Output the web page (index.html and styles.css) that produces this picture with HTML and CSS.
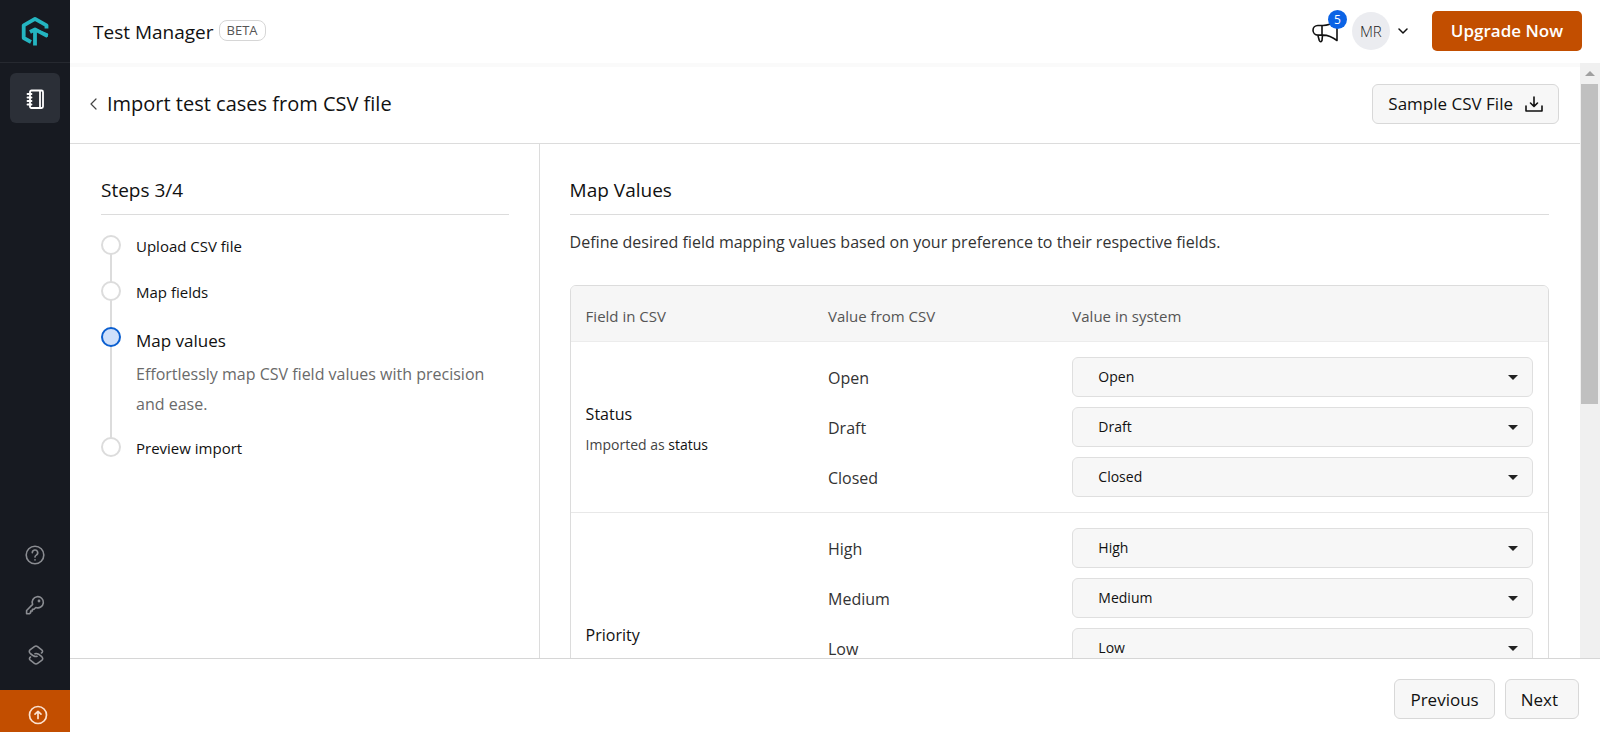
FILE: index.html
```html
<!DOCTYPE html>
<html lang="en">
<head>
<meta charset="utf-8">
<meta name="viewport" content="width=device-width, initial-scale=1">
<title>Test Manager</title>
<link rel="stylesheet" href="styles.css">
</head>
<body>
<div class="app">
  <nav class="sidebar" aria-label="Main">
    <a class="logo" href="#" aria-label="Home">
      <svg width="28" height="30" viewBox="0 0 28 30" fill="none" stroke="#24b5c1" stroke-width="3.800" stroke-linejoin="round">
        <path d="M25.500 12.500V9.300L14 2.800L2.700 9.300V22L10 26"/>
        <path d="M9 16L14 13.300L26.500 20.200M14 13V29.500"/>
        <path d="M17 13.500L27 17.500V21L21 18.500Z" fill="#24b5c1" stroke="none"/>
      </svg>
    </a>
    <a class="nav-item active" href="#" aria-label="Test cases">
      <svg width="20" height="20" viewBox="0 0 20 20" fill="none" stroke="#fff" stroke-width="1.800" stroke-linecap="round">
        <rect x="5" y="1.500" width="13" height="17.500" rx="1.500"/>
        <path d="M15 2v16.500M2.500 5h4M2.500 8.500h4M2.500 12h4M2.500 15.500h4"/>
      </svg>
    </a>
    <div class="nav-bottom">
      <a class="nav-link" href="#" aria-label="Help">
        <svg width="20" height="20" viewBox="0 0 20 20" fill="none" stroke="currentColor" stroke-width="1.600" stroke-linecap="round">
          <circle cx="10" cy="10" r="8.800"/>
          <path d="M7.300 7.800a2.700 2.700 0 1 1 4 2.300c-.9.500-1.300 1-1.300 2M10 14.700v.2"/>
        </svg>
      </a>
      <a class="nav-link" href="#" aria-label="Access key">
        <svg width="20" height="20" viewBox="0 0 20 20" fill="none" stroke="currentColor" stroke-width="1.600" stroke-linejoin="round" stroke-linecap="round">
          <path d="M7.600 9.400A5.600 5.600 0 1 1 10.800 12.500L8.800 14.300H7.400V16H5.700V17.600L4.500 18.700H1.600V15.500Z"/>
          <circle cx="14" cy="6" r=".6" fill="currentColor"/>
        </svg>
      </a>
      <a class="nav-link" href="#" aria-label="Integrations">
        <svg width="20" height="20" viewBox="0 0 20 20" fill="none" stroke="currentColor" stroke-width="1.600" stroke-linejoin="round" stroke-linecap="round">
          <path d="M12 11.300C9.500 12.300 7.500 10.500 5.200 8.300C4 7 4 5.600 5.300 4.600L9.400 1.600C10.400.9 11.600.9 12.600 1.600L16.700 4.800C18 5.900 17.700 7.200 16.500 8"/>
          <path d="M10 8.700C12.500 7.700 14.500 9.500 16.800 11.700C18 13 18 14.400 16.700 15.400L12.600 18.400C11.600 19.100 10.400 19.100 9.400 18.400L5.300 15.200C4 14.100 4.300 12.800 5.500 12"/>
        </svg>
      </a>
    </div>
    <a class="nav-upgrade" href="#" aria-label="Upgrade">
      <svg width="20" height="20" viewBox="0 0 20 20" fill="none" stroke="currentColor" stroke-width="1.700" stroke-linejoin="round" stroke-linecap="round">
        <circle cx="10" cy="10" r="8.500"/>
        <path d="M10 13.500V6.700M7 9.200L10 6.400L13 9.200"/>
      </svg>
    </a>
  </nav>

  <div class="main">
    <header class="topbar">
      <div class="brand"><span class="brand-name">Test Manager</span><span class="beta">BETA</span></div>
      <div class="top-actions">
        <button class="news" type="button" aria-label="Announcements">
          <svg width="28" height="26" viewBox="0 0 28 26" fill="none" stroke="currentColor" stroke-width="1.600" stroke-linejoin="round">
            <path d="M11 7.500H5.800a4.800 4.800 0 0 0 0 9.600H11C16 17.100 20.500 19 25 22.500V2.500C20.500 5.500 16 7.500 11 7.500ZM10 7.500V17M5.800 17L7.300 22.500Q8.500 25 10 22.500L10.500 17"/>
          </svg>
          <span class="count">5</span>
        </button>
        <button class="profile" type="button">
          <span class="avatar">MR</span>
          <svg width="10" height="6" viewBox="0 0 10 6" fill="none" stroke="currentColor" stroke-width="1.500" stroke-linecap="round" stroke-linejoin="round"><path d="M1 1L5 5L9 1"/></svg>
        </button>
        <button class="upgrade" type="button">Upgrade Now</button>
      </div>
    </header>

    <div class="body">
      <main class="scroll">
        <div class="page-head">
          <a class="back" href="#" aria-label="Back">
            <svg width="7" height="12" viewBox="0 0 7 12" fill="none" stroke="currentColor" stroke-width="1.200" stroke-linecap="round" stroke-linejoin="round"><path d="M6 1L1 6L6 11"/></svg>
          </a>
          <h1 class="title">Import test cases from CSV file</h1>
          <button class="btn sample" type="button">Sample CSV File
            <svg width="18" height="16" viewBox="0 0 18 16" fill="none" stroke="currentColor" stroke-width="1.600" stroke-linecap="round" stroke-linejoin="round"><path d="M1 10V15H17V10M9 1V10M5.500 7L9 10.500L12.500 7"/></svg>
          </button>
        </div>
        <div class="columns">
          <aside class="steps-panel">
            <h2 class="heading">Steps 3/4</h2>
            <ol class="steps">
              <li class="step">Upload CSV file</li>
              <li class="step">Map fields</li>
              <li class="step current" aria-current="step">
                <span class="step-name">Map values</span>
                <p class="step-note">Effortlessly map CSV field values with precision and ease.</p>
              </li>
              <li class="step">Preview import</li>
            </ol>
          </aside>
          <section class="content">
            <h2 class="heading">Map Values</h2>
            <p class="intro">Define desired field mapping values based on your preference to their respective fields.</p>
            <div class="table-box">
              <table class="map">
                <thead>
                  <tr><th class="col-field" scope="col">Field in CSV</th><th class="col-value" scope="col">Value from CSV</th><th scope="col">Value in system</th></tr>
                </thead>
                <tbody>
                  <tr>
                    <th class="field" scope="rowgroup" rowspan="3"><span class="field-name">Status</span><span class="field-note">Imported as <b>status</b></span></th>
                    <td><label for="s1">Open</label></td>
                    <td><div class="pick"><select id="s1"><option>Open</option></select></div></td>
                  </tr>
                  <tr><td><label for="s2">Draft</label></td><td><div class="pick"><select id="s2"><option>Draft</option></select></div></td></tr>
                  <tr><td><label for="s3">Closed</label></td><td><div class="pick"><select id="s3"><option>Closed</option></select></div></td></tr>
                </tbody>
                <tbody>
                  <tr>
                    <th class="field" scope="rowgroup" rowspan="5"><span class="field-name">Priority</span><span class="field-note">Imported as <b>priority</b></span></th>
                    <td><label for="p1">High</label></td>
                    <td><div class="pick"><select id="p1"><option>High</option></select></div></td>
                  </tr>
                  <tr><td><label for="p2">Medium</label></td><td><div class="pick"><select id="p2"><option>Medium</option></select></div></td></tr>
                  <tr><td><label for="p3">Low</label></td><td><div class="pick"><select id="p3"><option>Low</option></select></div></td></tr>
                  <tr><td><label for="p4">Critical</label></td><td><div class="pick"><select id="p4"><option>Critical</option></select></div></td></tr>
                  <tr><td><label for="p5">None</label></td><td><div class="pick"><select id="p5"><option>None</option></select></div></td></tr>
                </tbody>
              </table>
            </div>
          </section>
        </div>
      </main>
      <div class="scrollbar" aria-hidden="true">
        <svg width="10" height="5" viewBox="0 0 10 5" fill="#a0a0a0"><path d="M0 5L5 0L10 5Z"/></svg>
        <div class="thumb"></div>
      </div>
    </div>

    <footer class="footer">
      <button class="btn" type="button">Previous</button>
      <button class="btn next" type="button">Next</button>
    </footer>
  </div>
</div>
</body>
</html>
```
FILE: styles.css
```css
*, *::before, *::after { box-sizing: border-box; }
body {
  margin: 0;
  font-family: "Open Sans", "Noto Sans", sans-serif;
  font-size: 17px;
  color: #111;
  background: #fff;
}
a { color: inherit; text-decoration: none; }
svg { display: block; flex: none; }
button { font: inherit; color: inherit; cursor: pointer; }

.app { display: flex; height: 100vh; }

.sidebar {
  flex: none;
  width: 70px;
  display: flex;
  flex-direction: column;
  align-items: center;
  background: #171a21;
}
.logo {
  width: 100%;
  height: 63px;
  display: grid;
  place-items: center;
  border-bottom: 1px solid #262930;
}
.nav-item {
  width: 50px;
  height: 50px;
  margin-top: 10px;
  padding-top: 2px;
  display: grid;
  place-items: center;
  border-radius: 6px;
  background: #2b2f37;
}
.nav-bottom {
  margin-top: auto;
  padding-bottom: 10px;
  color: #8b8d92;
}
.nav-link {
  width: 50px;
  height: 50px;
  display: grid;
  place-items: center;
}
.nav-upgrade {
  width: 100%;
  height: 42px;
  padding: 8px 0 0 5px;
  display: grid;
  place-items: center;
  background: #c24e00;
  color: #fbe3d2;
}

.main { flex: 1; min-width: 0; display: flex; flex-direction: column; }

.topbar {
  flex: none;
  height: 63px;
  padding: 0 18px 2px 23px;
  display: flex;
  align-items: center;
  justify-content: space-between;
}
.brand { display: flex; align-items: center; gap: 5px; }
.brand-name { padding-top: 2px; font-size: 19px; }
.beta {
  height: 21px;
  padding: 0 7px;
  border: 1px solid #d6d6d6;
  border-radius: 8px;
  font-size: 13px;
  line-height: 19px;
  color: #555;
}
.top-actions { display: flex; align-items: center; }
.news {
  position: relative;
  width: 28px;
  margin-right: 12px;
  padding: 0;
  border: 0;
  background: none;
}
.count {
  position: absolute;
  top: -8px;
  left: 16px;
  width: 19px;
  height: 19px;
  border-radius: 50%;
  background: #0b63e5;
  color: #fff;
  font-size: 12px;
  line-height: 19px;
}
.profile {
  display: flex;
  align-items: center;
  gap: 8px;
  margin-right: 24px;
  padding: 0;
  border: 0;
  background: none;
}
.avatar {
  width: 38px;
  height: 38px;
  border-radius: 50%;
  background: #ebecf0;
  color: #222;
  font-size: 15px;
  font-weight: 300;
  line-height: 38px;
}
.upgrade {
  height: 40px;
  padding: 0 19px;
  border: 0;
  border-radius: 5px;
  background: #c24e00;
  color: #fff;
  font-weight: 600;
}

.body { flex: 1; min-height: 0; display: flex; }
.scroll {
  flex: 1;
  min-width: 0;
  display: flex;
  flex-direction: column;
  overflow-y: auto;
  scrollbar-width: none;
}
.scrollbar {
  flex: none;
  width: 20px;
  padding: 8px 2px 0 1px;
  display: flex;
  flex-direction: column;
  align-items: center;
  gap: 8px;
  background: #f0f0f0;
}
.thumb { width: 100%; height: 54.500%; background: #c0c0c0; }

.page-head {
  flex: none;
  height: 81px;
  padding: 0 21px 3px 20px;
  display: flex;
  align-items: center;
  gap: 10px;
  border-top: 4px solid #fafafa;
  border-bottom: 1px solid #dcdcdc;
}
.back { color: #444; }
.title { margin: 0; font-size: 20px; font-weight: 500; }
.btn {
  height: 40px;
  padding: 0 15px;
  border: 1px solid #d8d8d8;
  border-radius: 6px;
  background: #f7f7f7;
}
.sample { margin-left: auto; display: flex; align-items: center; gap: 12px; }

.columns { flex: none; display: flex; }
.steps-panel {
  width: 31.100%;
  padding: 30px 30px 30px 31px;
  border-right: 1px solid #dcdcdc;
}
.content { flex: 1; min-width: 0; padding: 30px 31px 30px 30px; }
.heading {
  margin: 0;
  padding-bottom: 8px;
  border-bottom: 1px solid #dcdcdc;
  font-size: 19px;
  line-height: 32px;
  font-weight: 500;
}

.steps { margin: 20px 0 0; padding: 0; list-style: none; }
.step {
  position: relative;
  min-height: 46px;
  padding-left: 35px;
  font-size: 15px;
  line-height: 22px;
  font-weight: 500;
}
.step::before {
  content: "";
  position: absolute;
  top: 0;
  left: 0;
  z-index: 1;
  width: 20px;
  height: 20px;
  border: 2px solid #dcdcdc;
  border-radius: 50%;
  background: #fff;
}
.step::after {
  content: "";
  position: absolute;
  top: 10px;
  bottom: -10px;
  left: 9px;
  width: 2px;
  background: #dcdcdc;
}
.step:last-child::after { display: none; }
.current::before { border-color: #0b5fd0; background: #cfe0fb; }
.current { padding-bottom: 18px; }
.step-name { display: block; font-size: 17px; line-height: 28px; }
.step-note { margin: 4px 0 0; font-size: 16px; line-height: 30px; font-weight: 400; color: #6a6a6a; }

.intro { margin: 12px 0 28px; font-size: 16px; line-height: 30px; color: #333; }
.table-box { border: 1px solid #dcdcdc; border-radius: 6px; overflow: hidden; }
.map { width: 100%; table-layout: fixed; border-collapse: collapse; }
.map th, .map td { padding: 5px 15px; text-align: left; }
.map thead th {
  height: 55px;
  padding-top: 10px;
  background: #f6f6f6;
  border-bottom: 1px solid #ececec;
  font-size: 15px;
  font-weight: 500;
  color: #555;
}
.col-field { width: 24.800%; }
.col-value { width: 25%; }
.map tbody + tbody { border-top: 1px solid #e8e8e8; }
.map tbody tr:first-child td { padding-top: 15px; }
.map tbody tr:last-child td { padding-bottom: 15px; }
.map td { font-size: 16px; color: #333; }
.map td label { display: block; padding-top: 3px; }
.map .field { padding-top: 10px; }
.field-name { display: block; font-size: 16px; line-height: 30px; font-weight: 500; }
.field-note { display: block; margin-top: 1px; font-size: 14px; line-height: 30px; font-weight: 400; color: #444; }
.field-note b { font-weight: 500; color: #111; }
.pick { position: relative; }
.pick::after {
  content: "";
  position: absolute;
  top: 18px;
  right: 15px;
  border: 5px solid transparent;
  border-top-color: #222;
  border-bottom: 0;
  pointer-events: none;
}
.pick select {
  display: block;
  width: 100%;
  height: 40px;
  padding: 0 25px;
  appearance: none;
  border: 1px solid #dfdfdf;
  border-radius: 6px;
  background: #f7f7f7;
  color: #111;
  font: 500 14px "Open Sans", "Noto Sans", sans-serif;
}

.footer {
  flex: none;
  height: 74px;
  padding: 7px 21px 0 0;
  display: flex;
  align-items: center;
  justify-content: flex-end;
  gap: 10px;
  border-top: 1px solid #d6d6d6;
  background: #fff;
}
.next { padding-right: 20px; }
```
